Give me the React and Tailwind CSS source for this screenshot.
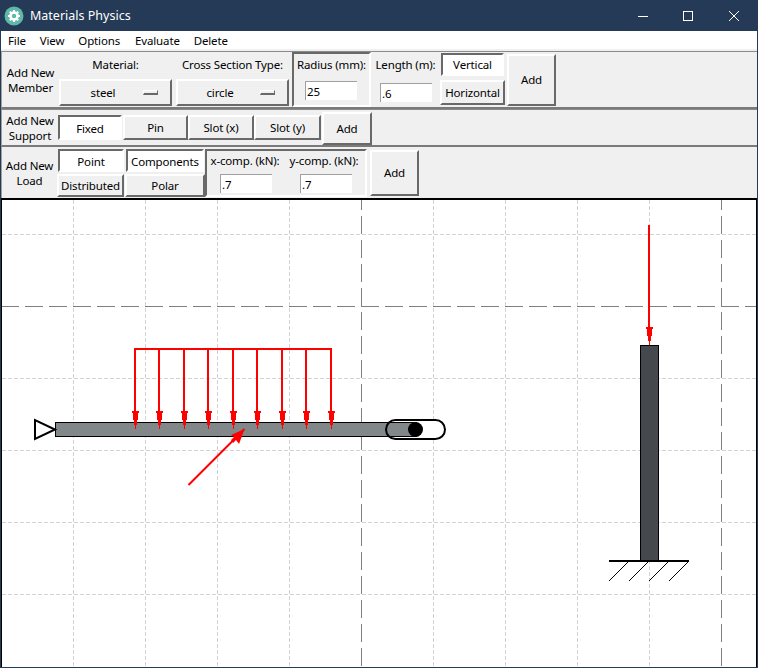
import React from "react";

const raised = "border-2 border-t-white border-l-white border-r-[#696969] border-b-[#696969] bg-[#f0f0f0]";
const sunken = "border-2 border-t-[#696969] border-l-[#696969] border-r-white border-b-white bg-white";

function Btn({ sel, className, children }) {
  return (
    <div className={`flex items-center justify-center shrink-0 ${sel ? sunken : raised} ${className}`}>
      {children}
    </div>
  );
}

function Field({ value, className }) {
  return (
    <input
      readOnly
      value={value}
      className={`block h-[19px] w-[52px] bg-white border-l border-t border-[#a0a0a0] pl-[1px] outline-none text-black ${className}`}
    />
  );
}

function Label({ className, children }) {
  return <div className={`text-center leading-[15px] shrink-0 ${className}`}>{children}</div>;
}

function Menu({ className, children }) {
  return (
    <div className={`flex h-[27px] items-center ${raised} ${className}`}>
      <span className="w-[84px] pt-[1px] text-center">{children}</span>
      <span className="block w-[15px] h-[5px] ml-[-2px] bg-[#f0f0f0] border border-b-2 border-t-white border-l-white border-r-[#696969] border-b-[#696969]" />
    </div>
  );
}

function Arrow({ x, y1, y2 }) {
  return (
    <g>
      <line x1={x} y1={y1} x2={x} y2={y2 - 4} stroke="#ff0000" strokeWidth="2" shapeRendering="crispEdges" />
      <polygon
        points={`${x - 3},${y2 - 18} ${x + 4},${y2 - 18} ${x + 4},${y2 - 16} ${x + 3},${y2 - 16} ${x + 3},${y2 - 9} ${x + 2},${y2 - 9} ${x + 2},${y2 - 4} ${x + 1},${y2 - 4} ${x + 1},${y2} ${x},${y2} ${x},${y2 - 4} ${x - 1},${y2 - 4} ${x - 1},${y2 - 9} ${x - 2},${y2 - 9} ${x - 2},${y2 - 16} ${x - 3},${y2 - 16}`}
        fill="#ff0000"
        shapeRendering="crispEdges"
      />
    </g>
  );
}

function Drawing() {
  const lightV = [73, 145, 217, 289, 433, 505, 577, 649];
  const lightH = [234, 378, 450, 522, 594];
  const loads = [135, 159, 184, 208, 233, 257, 282, 306, 331];
  return (
    <svg width="755" height="468" viewBox="2 200 755 468" className="block">
      <rect x="2" y="200" width="755" height="468" fill="#ffffff" />
      <g stroke="#d3d3d3" strokeWidth="1" strokeDasharray="4 2" shapeRendering="crispEdges">
        {lightV.map((x) => (
          <line key={x} x1={x + 0.5} y1="200" x2={x + 0.5} y2="668" />
        ))}
        {lightH.map((y) => (
          <line key={y} x1="2" y1={y + 0.5} x2="757" y2={y + 0.5} />
        ))}
      </g>
      <g stroke="#808080" strokeWidth="1" strokeDasharray="18 6" shapeRendering="crispEdges">
        <line x1="1" y1="306.5" x2="757" y2="306.5" />
        <line x1="361.5" y1="192" x2="361.5" y2="668" />
        <line x1="721.5" y1="192" x2="721.5" y2="668" />
      </g>

      <rect x="386" y="420" width="59" height="19" rx="9.5" fill="#ffffff" />
      <rect x="55.5" y="422.5" width="361" height="14" fill="#82878a" stroke="#000000" strokeWidth="1" shapeRendering="crispEdges" />
      <rect x="386" y="420" width="59" height="19" rx="9.5" fill="none" stroke="#000000" strokeWidth="2" />
      <circle cx="415.5" cy="429.5" r="7.5" fill="#000000" />
      <polygon points="35,420 35,439 55,429.5" fill="#ffffff" stroke="#000000" strokeWidth="2" />

      {loads.map((x) => (
        <Arrow key={x} x={x} y1={349} y2={429} />
      ))}
      <line x1="134" y1="349" x2="332" y2="349" stroke="#ff0000" strokeWidth="2" shapeRendering="crispEdges" />

      <line x1="188.5" y1="485" x2="244.5" y2="429" stroke="#ff0000" strokeWidth="2" />
      <polygon points="244.5,429 239,444 236,440 233,443 231,440 234,437 231,435" fill="#ff0000" />

      <rect x="640.5" y="345.5" width="18" height="216" fill="#45494e" stroke="#000000" strokeWidth="1" shapeRendering="crispEdges" />
      <Arrow x={649} y1={225} y2={345} />
      <line x1="609" y1="561" x2="689" y2="561" stroke="#000000" strokeWidth="2" shapeRendering="crispEdges" />
      <g stroke="#000000" strokeWidth="1">
        <line x1="609" y1="581" x2="629" y2="561" />
        <line x1="629" y1="581" x2="649" y2="561" />
        <line x1="649" y1="581" x2="669" y2="561" />
        <line x1="669" y1="581" x2="689" y2="561" />
      </g>
    </svg>
  );
}

export default function App() {
  return (
    <div
      className="w-[758px] h-[668px] flex flex-col overflow-hidden bg-[#f0f0f0] border-x border-b border-[#243a56] text-[11.5px] tracking-[-0.15px] text-black"
      style={{ fontFamily: '"Noto Sans", sans-serif' }}
    >
      {/* title bar */}
      <div className="h-[31px] shrink-0 flex items-center bg-[#243a56] text-white text-[12.5px] tracking-normal mx-[-1px]">
        <svg width="20" height="20" viewBox="0 0 20 20" className="ml-[4px] mr-[6px] shrink-0">
          <circle cx="10" cy="10" r="9.5" fill="#5fb8a8" />
          <circle cx="10" cy="10" r="3.6" fill="none" stroke="#ffffff" strokeWidth="2.4" />
          <g stroke="#ffffff" strokeWidth="2">
            <line x1="10" y1="4" x2="10" y2="16" />
            <line x1="4" y1="10" x2="16" y2="10" />
            <line x1="5.8" y1="5.8" x2="14.2" y2="14.2" />
            <line x1="14.2" y1="5.8" x2="5.8" y2="14.2" />
          </g>
          <circle cx="10" cy="10" r="2.2" fill="#5fb8a8" />
        </svg>
        <span className="pt-[2px]">Materials Physics</span>
        <div className="ml-auto flex items-center">
          <svg width="10" height="10" viewBox="0 0 10 10" className="mr-[35px]">
            <line x1="0" y1="5.5" x2="10" y2="5.5" stroke="#fff" />
          </svg>
          <svg width="10" height="10" viewBox="0 0 10 10" className="mr-[36px]">
            <rect x="0.5" y="0.5" width="9" height="9" fill="none" stroke="#fff" />
          </svg>
          <svg width="10" height="10" viewBox="0 0 10 10" className="mr-[19px]">
            <path d="M0 0L10 10M10 0L0 10" stroke="#fff" />
          </svg>
        </div>
      </div>

      {/* menu */}
      <div className="h-[18px] shrink-0 flex items-center bg-white pl-[7px] pt-[2px] gap-[14px]">
        <span>File</span>
        <span>View</span>
        <span>Options</span>
        <span className="ml-[1px]">Evaluate</span>
        <span>Delete</span>
      </div>
      <div className="h-[2px] shrink-0" />

      {/* member row */}
      <div className="h-[58px] shrink-0 flex items-start border-t border-l border-b-2 border-t-[#8a8a8a] border-l-[#a0a0a0] border-b-[#7a7a7a]">
        <Label className="w-[57px] mt-[13px]">
          Add New
          <br />
          Member
        </Label>
        <div className="w-[113px] shrink-0 flex flex-col">
          <div className="h-[18px] mt-[4px] mb-[5px] text-center leading-[18px]">Material:</div>
          <Menu className="w-[113px]">steel</Menu>
        </div>
        <div className="w-[113px] shrink-0 flex flex-col ml-[4px]">
          <div className="h-[18px] mt-[4px] mb-[5px] text-center leading-[18px] whitespace-nowrap">Cross Section Type:</div>
          <Menu className="w-[113px]">circle</Menu>
        </div>
        <div className={`w-[79px] h-[55px] ml-[3px] shrink-0 flex flex-col ${sunken} !bg-[#f0f0f0]`}>
          <div className="h-[18px] mt-[2px] text-center leading-[18px] whitespace-nowrap">Radius (mm):</div>
          <Field value="25" className="mt-[7px] ml-[11px]" />
        </div>
        <div className="w-[69px] shrink-0 flex flex-col">
          <div className="h-[18px] mt-[4px] text-center leading-[18px] whitespace-nowrap">Length (m):</div>
          <Field value=".6" className="mt-[9px] ml-[9px]" />
        </div>
        <div className="w-[65px] shrink-0 flex flex-col items-center">
          <Btn sel className="w-[63px] h-[23px] mt-[1px]">Vertical</Btn>
          <Btn className="w-[65px] h-[25px] mt-[4px]">Horizontal</Btn>
        </div>
        <Btn className="w-[49px] h-[52px] ml-[2px] mt-[2px]">Add</Btn>
      </div>

      {/* support row */}
      <div className="h-[38px] shrink-0 flex items-start border-t border-l border-b-2 border-t-[#8a8a8a] border-l-[#a0a0a0] border-b-[#7a7a7a]">
        <Label className="w-[56px] mt-[3px]">
          Add New
          <br />
          Support
        </Label>
        <Btn sel className="w-[64px] h-[25px] mt-[5px] pt-[2px]">Fixed</Btn>
        <Btn className="w-[65px] h-[25px] mt-[5px] ml-[1px]">Pin</Btn>
        <Btn className="w-[66px] h-[25px] mt-[5px]">Slot (x)</Btn>
        <Btn className="w-[67px] h-[25px] mt-[5px]">Slot (y)</Btn>
        <Btn className="w-[50px] h-[33px] mt-[2px] ml-[1px]">Add</Btn>
      </div>

      {/* load row */}
      <div className="h-[51px] shrink-0 flex items-start border-l border-l-[#a0a0a0]">
        <Label className="w-[55px] mt-[11px]">
          Add New
          <br />
          Load
        </Label>
        <div className="flex flex-col shrink-0 w-[148px]">
          <div className="flex mt-[2px] ml-[1px]">
            <Btn sel className="w-[66px] h-[23px] pt-[2px]">Point</Btn>
            <Btn sel className="w-[78px] h-[23px] ml-[2px] pt-[2px]">Components</Btn>
          </div>
          <div className="flex mt-[2px]">
            <Btn className="w-[67px] h-[23px]">Distributed</Btn>
            <Btn className="w-[80px] h-[23px] ml-[1px]">Polar</Btn>
          </div>
        </div>
        <div className={`w-[162px] h-[48px] mt-[2px] shrink-0 flex ${sunken} !bg-[#f0f0f0]`}>
          <div className="w-[76px] flex flex-col">
            <div className="h-[18px] mt-[1px] text-center leading-[18px] whitespace-nowrap">x-comp. (kN):</div>
            <Field value=".7" className="mt-[4px] ml-[13px]" />
          </div>
          <div className="w-[82px] flex flex-col">
            <div className="h-[18px] mt-[1px] text-center leading-[18px] whitespace-nowrap">y-comp. (kN):</div>
            <Field value=".7" className="mt-[4px] ml-[17px]" />
          </div>
        </div>
        <Btn className="w-[49px] h-[46px] ml-[3px] mt-[3px]">Add</Btn>
      </div>

      {/* canvas */}
      <div className="flex-1 min-h-0 border-t-2 border-l border-r border-black overflow-hidden bg-white">
        <Drawing />
      </div>
    </div>
  );
}
